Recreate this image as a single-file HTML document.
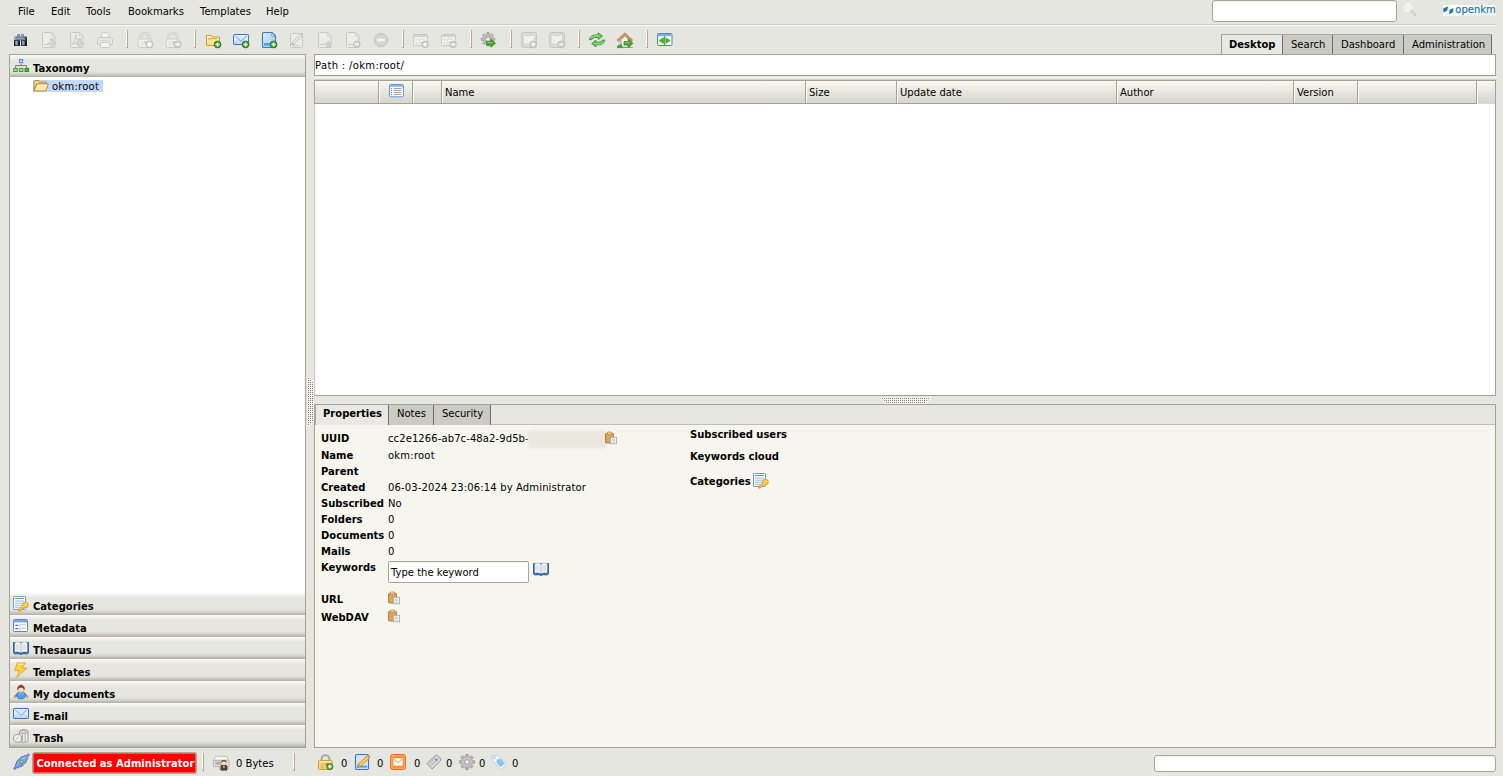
<!DOCTYPE html>
<html lang="en">
<head>
<meta charset="utf-8">
<title>OpenKM</title>
<style>
html,body{margin:0;padding:0;}
body{width:1503px;height:776px;overflow:hidden;background:#e6e6e0;position:relative;
 font-family:"DejaVu Sans",Verdana,"Liberation Sans",sans-serif;font-size:10px;color:#000;line-height:12px;}
.a{position:absolute;}
.t{position:absolute;white-space:nowrap;height:12px;line-height:12px;}
.b{font-weight:bold;}
.ico{position:absolute;width:16px;height:16px;overflow:visible;}
.sep{position:absolute;width:2px;height:18px;background:linear-gradient(to right,#fbfbf9 0,#fbfbf9 1px,#b9a999 1px,#b9a999 2px);}
.sep:after{content:"";position:absolute;left:0;bottom:0;width:2px;height:1px;background:#b9a999;}
.sh{position:absolute;left:10px;width:295px;height:22px;
 background:linear-gradient(to bottom,#fdfcfc 0,#f5f4f3 1.5px,#ecece8 3.5px,#e6e6e0 5.5px,#e6e6e0 16px,#dcdcd4 18px,#c6c6bc 20px,#b0b0a4 22px);}
.sh .t{left:23px;top:8px;font-weight:bold;}
.tab{position:absolute;top:35px;height:19px;background:#cbcbc5;border-right:1px solid #6e6e6e;}
.tab .t{top:4px;}
.th{position:absolute;top:81px;height:22px;background:linear-gradient(to bottom,#f9f9f2 0,#efefe8 6px,#e5e5de 12px,#dbdbd5 18px,#d6d6d0 22px);}
.cs{position:absolute;top:81px;width:2px;height:22px;background:linear-gradient(to right,#a4a494 0,#a4a494 1px,#fbfbf6 1px,#fbfbf6 2px);}
.inp{position:absolute;background:#fff;border:1px solid #a6a692;border-radius:3px;box-sizing:border-box;box-shadow:inset 0 1px 1px rgba(0,0,0,.06);}
</style>
</head>
<body>
<!-- menu bar -->
<div class="t" style="left:18px;top:6px;">File</div>
<div class="t" style="left:51px;top:6px;">Edit</div>
<div class="t" style="left:86px;top:6px;">Tools</div>
<div class="t" style="left:128px;top:6px;">Bookmarks</div>
<div class="t" style="left:200px;top:6px;">Templates</div>
<div class="t" style="left:266px;top:6px;">Help</div>
<div class="a" style="left:9px;top:24px;width:1487px;height:1px;background:#cbcbc5;"></div>
<div class="a" style="left:9px;top:25px;width:1487px;height:1px;background:#fbfbf9;"></div>
<div class="inp" style="left:1212px;top:0px;width:185px;height:22px;"></div>
<svg class="ico" style="left:1403px;top:3px;" width="16" height="16" viewBox="0 0 16 16"><circle cx="5" cy="4.600" r="5" fill="#efefed" stroke="#dadad8" stroke-width=".7"/><circle cx="5" cy="4.600" r="4.100" fill="none" stroke="#f7f7f5" stroke-width="1"/><path d="M8.600 8.200l3.600 3.600" stroke="#c6c6c4" stroke-width="2.600" stroke-linecap="round"/><path d="M8.800 8.400l3.200 3.200" stroke="#f0f0ee" stroke-width="1"/></svg>
<!-- logo -->
<div class="a" style="left:1443px;top:5px;width:53px;height:11px;background:#fff;"></div>
<svg class="a" style="left:1443px;top:5px;" width="54" height="11" viewBox="0 0 54 11"><path d="M.2 3.600L5.100 1.300 4.200 5.800.45 7.400zM6.500 5.100L10.300 3.100V7.100L6 9.400z" fill="#1f78a8"/><path d="M4.600 1.600L6.600 1 7.600 2.600M1.600 7.800L3.400 9.600 5.200 9.200" fill="none" stroke="#a9cfe2" stroke-width=".5"/><text x="12.300" y="8" font-family="DejaVu Sans,Liberation Sans,sans-serif" font-size="11.300" fill="#1f7aa6" stroke="#1f7aa6" stroke-width=".25" textLength="40.500" lengthAdjust="spacingAndGlyphs">openkm</text><path d="M22 10.100h31" stroke="#bcdcec" stroke-width=".8"/></svg>
<!-- toolbar -->
<svg class="ico" style="left:13px;top:32px;" width="16" height="16" viewBox="0 0 16 16"><path d="M4 1.900h3v2.800H4zM8.100 1.900h2.900v2.800H8.100z" fill="#6f87a1"/><path d="M5 2v2.600M9.600 2v2.600" stroke="#b4c6d8" stroke-width=".7"/><path d="M1.300 5.600Q1.500 4.300 3 4.300H12Q13.600 4.300 13.800 5.600L14 8.500H1z" fill="#6d849d"/><path d="M1.600 6.400Q1.800 5 3 4.800L3.400 8H1.400z" fill="#9db1c6"/><path d="M4.800 6.700Q7.500 5.500 10.400 6.700" fill="none" stroke="#8fb8e6" stroke-width=".9"/><path d="M12.200 4.400Q13.600 4.500 13.800 5.600L14 8.500H12.800z" fill="#1a222c"/><path d="M1 8.300h6v5.700H1zM8.100 8.300H14v5.700H8.100z" fill="#161e29"/><path d="M2.400 9h2.300v4.300H2.400zM9.300 9h2.200v4.300H9.300z" fill="#b3c1cf"/><path d="M3.900 9.600v3.700M10.800 9.600v3.700" stroke="#5c6b7b" stroke-width=".6"/></svg>
<svg class="ico" style="left:41px;top:32px;" width="16" height="16" viewBox="0 0 16 16"><path d="M2.5 .5H10.500L14 4V14.5a1 1 0 0 1-1 1H2.5a1 1 0 0 1-1-1V1.5a1 1 0 0 1 1-1z" fill="#ebebe9" stroke="#c8c8c6"/><path d="M10.500 .8V4h3.200" fill="none" stroke="#d4d4d2"/><path d="M3 12.5h4" stroke="#d0d0ce"/><path d="M9.200 6.800h3v4.200H14.800L10.700 15.300 6.600 11H9.200z" fill="#d1d1cf" stroke="#c2c2c0" stroke-width=".6"/><path d="M10.200 7.500v5" stroke="#e2e2e0" stroke-width=".8"/></svg>
<svg class="ico" style="left:69px;top:32px;" width="16" height="16" viewBox="0 0 16 16"><path d="M2.5 .5H10.500L14 4V14.5a1 1 0 0 1-1 1H2.5a1 1 0 0 1-1-1V1.5a1 1 0 0 1 1-1z" fill="#ebebe9" stroke="#c8c8c6"/><path d="M10.500 .8V4h3.200" fill="none" stroke="#d4d4d2"/><path d="M3 13.5C5 11 6.5 6 6.6 2.5M6.6 2.5C7 7 9 11 11 13M2.5 12.5c3-2 6-2 8 0" fill="none" stroke="#c6c6c4" stroke-width=".9"/><path d="M9.200 6.800h3v4.200H14.800L10.700 15.300 6.600 11H9.200z" fill="#d1d1cf" stroke="#c2c2c0" stroke-width=".6"/><path d="M10.200 7.500v5" stroke="#e2e2e0" stroke-width=".8"/></svg>
<svg class="ico" style="left:97px;top:32px;" width="16" height="16" viewBox="0 0 16 16"><path d="M4.5 .5H10l2 2V7H4.5z" fill="#f0f0ee" stroke="#cdcdcb"/><rect x=".5" y="5.5" width="15" height="7.5" rx="2" fill="#e6e6e4" stroke="#c8c8c6"/><rect x="3.5" y="10.5" width="9" height="5" rx="1" fill="#f3f3f1" stroke="#c8c8c6"/><path d="M3 8.5h10" stroke="#d6d6d4"/></svg>
<svg class="ico" style="left:137px;top:32px;" width="16" height="16" viewBox="0 0 16 16"><path d="M3.300 7.500V5.600a4.500 4.500 0 0 1 9 0V7.500" fill="none" stroke="#d0d0ce" stroke-width="2.700"/><path d="M3.300 7.500V5.600a4.500 4.500 0 0 1 9 0V7.500" fill="none" stroke="#e8e8e6" stroke-width="1"/><rect x="1.300" y="7" width="13.200" height="8.500" rx=".8" fill="#f1f1ef" stroke="#cdcdcb"/><path d="M3.500 9.500h3M3.500 11.300h3M3.500 13.100h4.500" stroke="#dadad8" stroke-width=".9"/><path d="M7.500 9h2v3.200h-2z" fill="#c9c9c7"/><circle cx="12.6" cy="12.4" r="3.500" fill="#dededc" stroke="#b9b9b7" stroke-width=".9"/><path d="M10.399999999999999 12.4h4.400M12.6 10.2v4.400" stroke="#fbfbf9" stroke-width="1.600"/></svg>
<svg class="ico" style="left:165px;top:32px;" width="16" height="16" viewBox="0 0 16 16"><path d="M3.300 7.500V5.600a4.500 4.500 0 0 1 9 0V7.500" fill="none" stroke="#d0d0ce" stroke-width="2.700"/><path d="M3.300 7.500V5.600a4.500 4.500 0 0 1 9 0V7.500" fill="none" stroke="#e8e8e6" stroke-width="1"/><rect x="1.300" y="7" width="13.200" height="8.500" rx=".8" fill="#f1f1ef" stroke="#cdcdcb"/><path d="M3.500 9.500h3M3.500 11.300h3M3.500 13.100h4.500" stroke="#dadad8" stroke-width=".9"/><path d="M7.500 9h2v3.200h-2z" fill="#c9c9c7"/><circle cx="12.6" cy="12.4" r="3.500" fill="#d6d6d4" stroke="#b9b9b7" stroke-width=".9"/><path d="M10.399999999999999 12.4h4.400" stroke="#fbfbf9" stroke-width="1.700"/></svg>
<svg class="ico" style="left:205px;top:32px;" width="16" height="16" viewBox="0 0 16 16"><defs><linearGradient id="fg8" x1="0" y1="0" x2="0" y2="1"><stop offset="0" stop-color="#fffdf0"/><stop offset="1" stop-color="#f6d25e"/></linearGradient></defs><path d="M1.5 3.5h5l1 1.5h7v8.5h-13z" fill="url(#fg8)" stroke="#dc9a2e"/><path d="M3.5 6.5h9" stroke="#e8b44a" stroke-width="1.4"/><path d="M3.2 6.2h2.4v1.6H3.2z" fill="#e8b44a"/><path d="M2 8.5h12v4.5H2z" fill="#fbe596" opacity=".7"/><circle cx="12.6" cy="12.5" r="3.4" fill="#3f9b2a" stroke="#2b7a1b" stroke-width=".9"/><path d="M10.6 12.5h4M12.6 10.5v4" stroke="#fff" stroke-width="1.5"/></svg>
<svg class="ico" style="left:233px;top:32px;" width="16" height="16" viewBox="0 0 16 16"><defs><linearGradient id="mg9" x1="0" y1="0" x2="0" y2="1"><stop offset="0" stop-color="#ffffff"/><stop offset="1" stop-color="#bcd4f6"/></linearGradient></defs><rect x=".5" y="2.5" width="15" height="10" rx=".8" fill="url(#mg9)" stroke="#3b74c6"/><path d="M1.6 3.6L8 9.2l6.4-5.6" fill="#dbe8fb" stroke="#6a9be0" stroke-width=".9"/><path d="M1.6 11.6L6 7.5M14.4 11.6L10 7.5" stroke="#a5c3ee" stroke-width=".7"/><circle cx="12.6" cy="12.5" r="3.4" fill="#3f9b2a" stroke="#2b7a1b" stroke-width=".9"/><path d="M10.6 12.5h4M12.6 10.5v4" stroke="#fff" stroke-width="1.5"/></svg>
<svg class="ico" style="left:261px;top:32px;" width="16" height="16" viewBox="0 0 16 16"><defs><linearGradient id="dg10" x1="0" y1="0" x2="1" y2="1"><stop offset="0" stop-color="#e3eefc"/><stop offset="1" stop-color="#9fc3f1"/></linearGradient></defs><path d="M2.5 .5H11L14.5 4V14.5a1 1 0 0 1-1 1H2.5a1 1 0 0 1-1-1V1.5a1 1 0 0 1 1-1z" fill="url(#dg10)" stroke="#3a78cb" stroke-width="1.1"/><path d="M10.8 .8V4.2h3.4z" fill="#fff" stroke="#3a78cb" stroke-width=".7"/><rect x="3" y="11" width="8" height="2.6" fill="#3da5f4"/><circle cx="12.6" cy="12.5" r="3.4" fill="#3f9b2a" stroke="#2b7a1b" stroke-width=".9"/><path d="M10.6 12.5h4M12.6 10.5v4" stroke="#fff" stroke-width="1.5"/></svg>
<svg class="ico" style="left:289px;top:32px;" width="16" height="16" viewBox="0 0 16 16"><rect x="1.5" y="1.5" width="12" height="14" rx="1" fill="#ebebe9" stroke="#c8c8c6"/><path d="M3 13.5h7.5" stroke="#d0d0ce" stroke-width="1.2"/><path d="M3.6 11.8L12.4 2.6" stroke="#c6c6c4" stroke-width="3.2" stroke-linecap="round"/><path d="M4.2 11.2L12 3" stroke="#f0f0ee" stroke-width="1.3"/><path d="M2.6 13l.6-2.2 1.6 1.6z" fill="#bdbdbb"/></svg>
<svg class="ico" style="left:317px;top:32px;" width="16" height="16" viewBox="0 0 16 16"><path d="M2.5 .5H10.500L14 4V14.5a1 1 0 0 1-1 1H2.5a1 1 0 0 1-1-1V1.5a1 1 0 0 1 1-1z" fill="#ebebe9" stroke="#c8c8c6"/><path d="M10.500 .8V4h3.200" fill="none" stroke="#d4d4d2"/><path d="M3 12.5h5" stroke="#d0d0ce" stroke-width="1.4"/><path d="M11.5 8.6l1.1 2.4 2.6.3-1.9 1.8.5 2.6-2.3-1.3-2.3 1.3.5-2.6-1.9-1.8 2.6-.3z" fill="#cfcfcd" stroke="#c0c0be" stroke-width=".5"/></svg>
<svg class="ico" style="left:345px;top:32px;" width="16" height="16" viewBox="0 0 16 16"><path d="M2.5 .5H10.500L14 4V14.5a1 1 0 0 1-1 1H2.5a1 1 0 0 1-1-1V1.5a1 1 0 0 1 1-1z" fill="#ebebe9" stroke="#c8c8c6"/><path d="M10.500 .8V4h3.200" fill="none" stroke="#d4d4d2"/><path d="M3 12.5h5" stroke="#d0d0ce" stroke-width="1.4"/><circle cx="11.8" cy="12.2" r="3.3" fill="#d2d2d0" stroke="#bcbcba" stroke-width=".9"/><path d="M9.8 12.2h4" stroke="#f6f6f4" stroke-width="1.5"/></svg>
<svg class="ico" style="left:373px;top:32px;" width="16" height="16" viewBox="0 0 16 16"><circle cx="8" cy="8" r="6.6" fill="#d5d5d3" stroke="#c3c3c1"/><rect x="4.2" y="6.8" width="7.6" height="2.4" rx=".5" fill="#f6f6f4"/></svg>
<svg class="ico" style="left:413px;top:32px;" width="16" height="16" viewBox="0 0 16 16"><rect x=".5" y="2.5" width="14" height="11" rx=".8" fill="#f3f3f1" stroke="#c8c8c6"/><path d="M.8 3h13.4v2.2H.8z" fill="#d4d4d2"/><path d="M2.4 7.8h2.2M2.4 11h2.2" stroke="#c4c4c2" stroke-width="1.1"/><path d="M6.4 9.3V7.2h6M6.4 12.2v-1.8h4" fill="none" stroke="#d2d2d0" stroke-width=".9"/><circle cx="12" cy="12.4" r="3.3" fill="#d2d2d0" stroke="#bcbcba" stroke-width=".9"/><path d="M10 12.4h4M12 10.4v4" stroke="#f6f6f4" stroke-width="1.4"/></svg>
<svg class="ico" style="left:441px;top:32px;" width="16" height="16" viewBox="0 0 16 16"><rect x=".5" y="2.5" width="14" height="11" rx=".8" fill="#f3f3f1" stroke="#c8c8c6"/><path d="M.8 3h13.4v2.2H.8z" fill="#d4d4d2"/><path d="M2.4 7.8h2.2M2.4 11h2.2" stroke="#c4c4c2" stroke-width="1.1"/><path d="M6.4 9.3V7.2h6M6.4 12.2v-1.8h4" fill="none" stroke="#d2d2d0" stroke-width=".9"/><circle cx="12" cy="12.4" r="3.3" fill="#d2d2d0" stroke="#bcbcba" stroke-width=".9"/><path d="M10 12.4h4" stroke="#f6f6f4" stroke-width="1.5"/></svg>
<svg class="ico" style="left:481px;top:32px;" width="16" height="16" viewBox="0 0 16 16"><path d="M5.81 2.45 L5.88 0.49 L8.12 0.49 L8.19 2.45 L9.52 3.00 L10.95 1.66 L12.54 3.25 L11.20 4.68 L11.75 6.01 L13.71 6.08 L13.71 8.32 L11.75 8.39 L11.20 9.72 L12.54 11.15 L10.95 12.74 L9.52 11.40 L8.19 11.95 L8.12 13.91 L5.88 13.91 L5.81 11.95 L4.48 11.40 L3.05 12.74 L1.46 11.15 L2.80 9.72 L2.25 8.39 L0.29 8.32 L0.29 6.08 L2.25 6.01 L2.80 4.68 L1.46 3.25 L3.05 1.66 L4.48 3.00z" fill="#bdbdbd" stroke="#949494" stroke-width=".7" stroke-linejoin="round"/><circle cx="7" cy="7.2" r="2.3" fill="#eeeeee" stroke="#949494" stroke-width=".7"/><path d="M5.6 9.4h4.3V7.199999999999999l4.6 4-4.6 4V13.0H5.6z" fill="#4ea82f" stroke="#2f7f1a" stroke-width=".8" stroke-linejoin="round"/><path d="M6.3999999999999995 10.5h4.3" stroke="#9bd77f" stroke-width=".9"/></svg>
<svg class="ico" style="left:521px;top:32px;" width="16" height="16" viewBox="0 0 16 16"><rect x=".5" y=".5" width="15" height="15" rx="2" fill="#dadad8" stroke="#c6c6c4"/><rect x="2.5" y="3.5" width="11" height="8.5" rx=".6" fill="#ececea" stroke="#d0d0ce" stroke-width=".7"/><path d="M3 4l5 4.3L13 4" fill="none" stroke="#f8f8f6" stroke-width="1.2"/><circle cx="12.2" cy="12.4" r="3.3" fill="#d2d2d0" stroke="#bcbcba" stroke-width=".9"/><path d="M10.2 12.4h4M12.2 10.4v4" stroke="#f6f6f4" stroke-width="1.4"/></svg>
<svg class="ico" style="left:549px;top:32px;" width="16" height="16" viewBox="0 0 16 16"><rect x=".5" y=".5" width="15" height="15" rx="2" fill="#dadad8" stroke="#c6c6c4"/><rect x="2.5" y="3.5" width="11" height="8.5" rx=".6" fill="#ececea" stroke="#d0d0ce" stroke-width=".7"/><path d="M3 4l5 4.3L13 4" fill="none" stroke="#f8f8f6" stroke-width="1.2"/><circle cx="12.2" cy="12.4" r="3.3" fill="#d2d2d0" stroke="#bcbcba" stroke-width=".9"/><path d="M10.2 12.4h4" stroke="#f6f6f4" stroke-width="1.5"/></svg>
<svg class="ico" style="left:589px;top:32px;" width="16" height="16" viewBox="0 0 16 16"><path d="M.3 7.600C.8 4.600 3.400 2.900 6 2.900H9.300L9.100.8l4.400 3.300-4.200 3.500-.1-2.100H6.200C4.800 5.500 3.600 6.300 3 7.600z" fill="#6cc064" stroke="#2f8f2c" stroke-width=".8" stroke-linejoin="round"/><path d="M.3 7.600C.8 4.600 3.400 2.900 6 2.900H9.300L9.100.8l4.400 3.300-4.200 3.500-.1-2.100H6.200C4.800 5.500 3.600 6.300 3 7.600z" transform="rotate(180 8.100 7.850)" fill="#6cc064" stroke="#2f8f2c" stroke-width=".8" stroke-linejoin="round"/><path d="M1.600 6.400C2.400 4.800 4 3.900 6 3.900h4.600" fill="none" stroke="#b4e6ac" stroke-width=".8"/><path d="M14.600 9.300C13.800 10.900 12.200 11.800 10.200 11.800H5.600" fill="none" stroke="#b4e6ac" stroke-width=".8"/></svg>
<svg class="ico" style="left:617px;top:32px;" width="16" height="16" viewBox="0 0 16 16"><path d="M3.200 8.600v6.600h9.400V8.600L7.900 4.200z" fill="#fbfbfb" stroke="#8c8c8c" stroke-width=".8"/><path d="M3.600 8.800v6h1.400v-7.400z" fill="#c4c4c4"/><path d="M.5 8.800L7.900 2l7.400 6.800" fill="none" stroke="#c48440" stroke-width="2.300" stroke-linejoin="miter"/><path d="M1.400 8.200L7.900 2.300l6.500 5.900" fill="none" stroke="#e6b274" stroke-width=".7"/><path d="M.2 15.600c0-1.700 1.300-2.700 2.600-2.300.8-.9 2.300-.6 2.500.7v1.600z" fill="#4f9d35" stroke="#357a22" stroke-width=".5"/><path d="M.2 15.200h15.600v.7H.2z" fill="#4f9d35"/><path d="M7 9.5h4.3V7.3l4.6 4-4.6 4V13.100000000000001H7z" fill="#4ea82f" stroke="#2f7f1a" stroke-width=".8" stroke-linejoin="round"/><path d="M7.8 10.6h4.3" stroke="#9bd77f" stroke-width=".9"/></svg>
<svg class="ico" style="left:657px;top:32px;" width="16" height="16" viewBox="0 0 16 16"><rect x=".5" y="1.500" width="14.500" height="12" rx="1" fill="#fff" stroke="#5a84c9"/><path d="M1 2h13.500v2.200H1z" fill="#7fa9e8"/><path d="M1 4.200h6.800V13H1z" fill="#d6f5c8"/><path d="M7.800 4.200V13" stroke="#2d7d24" stroke-width="1"/><path d="M2.300 8.600L6.600 5.900v5.400zM13.300 8.600L9 5.900v5.400z" fill="#4fae3c" stroke="#2f8a26" stroke-width=".5"/></svg>
<div class="sep" style="left:126px;top:30px;"></div>
<div class="sep" style="left:194px;top:30px;"></div>
<div class="sep" style="left:402px;top:30px;"></div>
<div class="sep" style="left:470px;top:30px;"></div>
<div class="sep" style="left:510px;top:30px;"></div>
<div class="sep" style="left:578px;top:30px;"></div>
<div class="sep" style="left:646px;top:30px;"></div>
<!-- main tabs -->
<div class="a" style="left:1221px;top:34px;width:271px;height:1px;background:#a9a9a3;"></div>
<div class="a" style="left:1221px;top:35px;width:1px;height:19px;background:#9c9c96;"></div>
<div class="tab" style="left:1222px;top:35px;height:19px;width:60px;background:#e9e9e4;"><div class="t b" style="left:7px;top:4px;">Desktop</div></div>
<div class="tab" style="left:1283px;top:35px;height:19px;width:49px;"><div class="t" style="left:8px;top:4px;">Search</div></div>
<div class="tab" style="left:1333px;top:35px;height:19px;width:70px;"><div class="t" style="left:8px;top:4px;">Dashboard</div></div>
<div class="tab" style="left:1404px;top:35px;height:19px;width:87px;"><div class="t" style="left:8px;top:4px;">Administration</div></div>
<!-- left navigator -->
<div class="a" style="left:9px;top:54px;width:297px;height:694px;background:#fff;border:1px solid #a3a38f;box-sizing:border-box;"></div>
<div class="sh" style="top:55px;"><svg class="ico" style="left:3px;top:3px;" width="16" height="16" viewBox="0 0 16 16"><rect x="6.500" y="1.500" width="3.200" height="3.200" fill="#b9d0f5" stroke="#5b8bd8"/><path d="M8.100 5.500v2M2.600 10V7.600h11V10" fill="none" stroke="#7a7a7a" stroke-width="1"/><rect x=".6" y="10.500" width="3.600" height="3" fill="#a4dc90" stroke="#45a032"/><rect x="6.300" y="10.500" width="3.600" height="3" fill="#a4dc90" stroke="#45a032"/><rect x="12" y="10.500" width="3.600" height="3" fill="#5db848" stroke="#2f8a20"/></svg><div class="t">Taxonomy</div></div>
<div class="a" style="left:33px;top:80px;width:70px;height:12px;background:#c3d9fb;"></div>
<svg class="ico" style="left:33px;top:77.6px;" width="16" height="16" viewBox="0 0 16 16"><path d="M1 3.800c0-.8.500-1.300 1.300-1.300h3.400l1.200 1.500h5.600c.7 0 1.200.5 1.200 1.200V6H3.600L1 12.500z" fill="#f6d890" stroke="#b97a2c" stroke-width=".9" stroke-linejoin="round"/><path d="M3.700 6h11.700l-2.700 7H1z" fill="#fbe9b0" stroke="#b97a2c" stroke-width=".9" stroke-linejoin="round"/><path d="M4.300 7h9.800" stroke="#fff7dc" stroke-width=".8"/></svg>
<div class="t" style="left:52px;top:81px;letter-spacing:.25px;">okm:root</div>
<div class="sh" style="top:593px;"><svg class="ico" style="left:3px;top:3px;" width="16" height="16" viewBox="0 0 16 16"><rect x=".5" y=".5" width="12" height="13" rx=".6" fill="#fdfdff" stroke="#6f9be2"/><path d="M2 2.500h9" stroke="#5fb24c" stroke-width="1.100"/><path d="M2 5h9M2 7.200h9M2 9.400h9M2 11.600h6" stroke="#9dbcec" stroke-width="1"/><path d="M4.600 4v8.500M8 4v6" stroke="#c5d8f5" stroke-width=".8"/><path d="M6.600 14.200l4.600-4" stroke="#e3a21e" stroke-width="3" stroke-linecap="round"/><circle cx="12.400" cy="9" r="2.900" fill="#f7c84a" stroke="#dc9a20" stroke-width=".8"/><path d="M7 13.600l4.400-3.800" stroke="#fbe08a" stroke-width="1"/><circle cx="13.200" cy="8.200" r=".7" fill="#fff6d0"/></svg><div class="t">Categories</div></div>
<div class="sh" style="top:615px;"><svg class="ico" style="left:3px;top:3px;" width="16" height="16" viewBox="0 0 16 16"><rect x=".5" y="1.500" width="14" height="12" rx=".8" fill="#fff" stroke="#5a86d2"/><path d="M1 2h13v2.500H1z" fill="#7aa5e8"/><path d="M2.300 7.300h3M2.300 10.600h3" stroke="#3a6fd0" stroke-width="1.300"/><path d="M6.800 9V6.800h6M6.800 12.200V10.200h6" fill="none" stroke="#b9b9b9" stroke-width=".9"/></svg><div class="t">Metadata</div></div>
<div class="sh" style="top:637px;"><svg class="ico" style="left:3px;top:3px;" width="16" height="16" viewBox="0 0 16 16"><path d="M.5 2.500h15V13l-1 .8H9.200l-1.200.9-1.200-.9H1.500L.5 13z" fill="#2f6aa6" stroke="#1d4f86" stroke-width=".8" stroke-linejoin="round"/><path d="M1.800 2.600c2.200-.9 4.400-.7 6.200.5v9.500c-1.800-1-4-1.200-6.200-.4zM14.200 2.600c-2.200-.9-4.400-.7-6.200.5v9.500c1.800-1 4-1.200 6.200-.4z" fill="#fbfbfb" stroke="#9ab0c8" stroke-width=".5"/><path d="M3 5h3.600M3 7h3.600M3 9h3.600M9.400 5H13M9.400 7H13M9.400 9H13" stroke="#b4b4b4" stroke-width=".7"/></svg><div class="t">Thesaurus</div></div>
<div class="sh" style="top:659px;"><svg class="ico" style="left:3px;top:3px;" width="16" height="16" viewBox="0 0 16 16"><path d="M4.200 1h8L9 6h5L3.600 15.400 6.400 8.600H1.800z" fill="#f7d34a" stroke="#e0a528" stroke-width=".9" stroke-linejoin="round"/><path d="M5 2.200h5.200" stroke="#fdf0a8" stroke-width="1"/></svg><div class="t">Templates</div></div>
<div class="sh" style="top:681px;"><svg class="ico" style="left:3px;top:3px;" width="16" height="16" viewBox="0 0 16 16"><path d="M4.600 9.200L2 12.400M11.400 9.200L14 12.400" stroke="#3f86e8" stroke-width="1.300" stroke-linecap="round"/><circle cx="1.900" cy="12.700" r="1.100" fill="#f0a050" stroke="#d07a28" stroke-width=".4"/><circle cx="14.100" cy="12.700" r="1.100" fill="#f0a050" stroke="#d07a28" stroke-width=".4"/><ellipse cx="8" cy="11.600" rx="4.300" ry="3.300" fill="#4f9ff5" stroke="#2a6cd8" stroke-width=".8"/><path d="M5 10.400c1.600-1 4.400-1 6 0" fill="none" stroke="#9acbfb" stroke-width=".8"/><circle cx="8" cy="5.400" r="3.200" fill="#fbdcc0" stroke="#c98a5a" stroke-width=".6"/><path d="M4.700 5.600C4.300 2.600 6 1 8 1s3.700 1.600 3.300 4.600C10.600 4 9.600 3.400 8 3.400S5.400 4 4.700 5.600z" fill="#8a4a22" stroke="#6a3416" stroke-width=".5"/></svg><div class="t">My documents</div></div>
<div class="sh" style="top:703px;"><svg class="ico" style="left:3px;top:3px;" width="16" height="16" viewBox="0 0 16 16"><defs><linearGradient id="mg230" x1="0" y1="0" x2="0" y2="1"><stop offset="0" stop-color="#ffffff"/><stop offset="1" stop-color="#bcd4f6"/></linearGradient></defs><rect x=".5" y="2.500" width="15" height="10" rx=".6" fill="url(#mg230)" stroke="#3b74c6"/><path d="M1.600 3.600L8 9.400l6.400-5.800" fill="#dbe8fb" stroke="#6a9be0" stroke-width=".9"/><path d="M1.600 11.600L6 7.700M14.400 11.600L10 7.700" stroke="#a5c3ee" stroke-width=".7"/></svg><div class="t">E-mail</div></div>
<div class="sh" style="top:725px;"><svg class="ico" style="left:3px;top:3px;" width="16" height="16" viewBox="0 0 16 16"><path d="M6.400 3.800c0-1.200 1.900-2 4.300-2s4.300.8 4.300 2V12.600c0 1-1.900 1.800-4.300 1.800s-4.300-.8-4.300-1.800z" fill="#ededed" stroke="#8e8e8e" stroke-width=".8"/><ellipse cx="10.700" cy="3.800" rx="4.300" ry="1.700" fill="#d6d6d6" stroke="#8e8e8e" stroke-width=".7"/><path d="M9.400 6.200v7.600M12.200 6.200v7.600" stroke="#a8a8a8" stroke-width="1"/><ellipse cx="4.600" cy="10.300" rx="4.100" ry="3.900" fill="#f4f4f4" stroke="#868686" stroke-width=".8"/><ellipse cx="4.600" cy="10.300" rx="2.900" ry="2.700" fill="none" stroke="#dcdcdc" stroke-width=".7"/><path d="M3.200 10.800l2.400-1" stroke="#a4a4a4" stroke-width=".9"/></svg><div class="t">Trash</div></div>
<svg class="a" style="left:307px;top:377px;" width="7" height="50" viewBox="0 0 7 50"><defs><pattern id="dp1" width="2" height="2" patternUnits="userSpaceOnUse"><rect x="1" y="1" width="1" height="1" fill="#7f7f6c"/></pattern></defs><path d="M0 0h2l5 5v40l-5 5H0z" fill="#f4f4f0"/><rect x="0" y="0" width="2" height="48" fill="url(#dp1)"/><rect x="2" y="2" width="2" height="44" fill="url(#dp1)"/><rect x="4" y="4" width="2" height="40" fill="url(#dp1)"/></svg>
<!-- path -->
<div class="a" style="left:314px;top:54px;width:1182px;height:22px;background:#fff;border:1px solid #a3a38f;box-sizing:border-box;"></div>
<div class="t" style="left:315px;top:60px;letter-spacing:.34px;">Path : /okm:root/</div>
<!-- file browser -->
<div class="a" style="left:314px;top:76px;width:1183px;height:4px;background:linear-gradient(to bottom,#e2e2de 0,#e2e2de 1px,#f7f7f6 1px,#f7f7f6 2px,#e6e6e2 2px,#e6e6e2 3px,#d4d4ce 3px,#d4d4ce 4px);"></div>
<div class="a" style="left:314px;top:80px;width:1182px;height:316px;background:#fff;border:1px solid #a3a38f;box-sizing:border-box;"></div>
<div class="a" style="left:314px;top:104px;width:1px;height:291px;background:#cbcbc3;"></div>
<div class="a" style="left:315px;top:104px;width:1px;height:291px;background:#f3f3f1;"></div>
<div class="th" style="left:315px;width:1180px;"></div>
<div class="a" style="left:315px;top:103px;width:1162px;height:1px;background:#a3a38f;"></div>
<div class="a" style="left:1478px;top:103px;width:17px;height:1px;background:#d9d9d3;"></div>
<div class="cs" style="left:378px;"></div>
<div class="cs" style="left:412px;"></div>
<div class="cs" style="left:441px;"></div>
<div class="cs" style="left:805px;"></div>
<div class="cs" style="left:896px;"></div>
<div class="cs" style="left:1116px;"></div>
<div class="cs" style="left:1293px;"></div>
<div class="cs" style="left:1357px;"></div>
<div class="cs" style="left:1476px;"></div>
<svg class="ico" style="left:389px;top:84px;" width="16" height="16" viewBox="0 0 16 16"><rect x=".5" y=".5" width="14" height="12.300" rx="1.200" fill="#fff" stroke="#6a94dc"/><path d="M1 1h13v1.800H1z" fill="#8ab0ee"/><path d="M4.500 4.500h8M4.500 6.500h8M4.500 8.500h8M4.500 10.500h8" stroke="#a2a2a2" stroke-width="1"/><path d="M2 4.500h1M2 6.500h1M2 8.500h1M2 10.500h1" stroke="#3a8af0" stroke-width="1"/></svg>
<div class="t" style="left:445px;top:87px;">Name</div>
<div class="t" style="left:809px;top:87px;">Size</div>
<div class="t" style="left:900px;top:87px;">Update date</div>
<div class="t" style="left:1120px;top:87px;">Author</div>
<div class="t" style="left:1297px;top:87px;">Version</div>
<svg class="a" style="left:881px;top:397px;" width="50" height="7" viewBox="0 0 50 7"><defs><pattern id="dp2" width="2" height="2" patternUnits="userSpaceOnUse"><rect x="1" y="1" width="1" height="1" fill="#7f7f6c"/></pattern></defs><path d="M0 0h50v2l-5 5H5l-5-5z" fill="#f4f4f0"/><rect x="0" y="0" width="48" height="2" fill="url(#dp2)"/><rect x="2" y="2" width="44" height="2" fill="url(#dp2)"/><rect x="4" y="4" width="40" height="2" fill="url(#dp2)"/></svg>
<!-- properties -->
<div class="a" style="left:314px;top:404px;width:1182px;height:344px;background:#f6f6ee;border:1px solid #a3a38f;box-sizing:border-box;"></div>
<div class="a" style="left:315px;top:405px;width:1180px;height:20px;background:#e7e7e2;border-bottom:1px solid #bdbdbb;box-sizing:border-box;"></div>
<div class="tab" style="left:315px;top:405px;height:20px;width:73px;background:#e9e9e4;"><div class="t b" style="left:8px;top:3px;">Properties</div></div>
<div class="a" style="left:315px;top:405px;width:1px;height:20px;background:#acaca8;"></div>
<div class="tab" style="left:389px;top:405px;height:20px;width:44px;"><div class="t" style="left:8px;top:3px;">Notes</div></div>
<div class="tab" style="left:434px;top:405px;height:20px;width:56px;"><div class="t" style="left:8px;top:3px;">Security</div></div>
<div class="t b" style="left:321px;top:433px;">UUID</div>
<div class="t" style="left:388px;top:433px;letter-spacing:.1px;">cc2e1266-ab7c-48a2-9d5b-</div>
<div class="t b" style="left:321px;top:450px;">Name</div>
<div class="t" style="left:388px;top:450px;letter-spacing:.22px;">okm:root</div>
<div class="t b" style="left:321px;top:466px;">Parent</div>
<div class="t b" style="left:321px;top:482px;">Created</div>
<div class="t" style="left:388px;top:482px;letter-spacing:.14px;">06-03-2024 23:06:14 by Administrator</div>
<div class="t b" style="left:321px;top:498px;">Subscribed</div>
<div class="t" style="left:388px;top:498px;">No</div>
<div class="t b" style="left:321px;top:514px;">Folders</div>
<div class="t" style="left:388px;top:514px;">0</div>
<div class="t b" style="left:321px;top:530px;">Documents</div>
<div class="t" style="left:388px;top:530px;">0</div>
<div class="t b" style="left:321px;top:546px;">Mails</div>
<div class="t" style="left:388px;top:546px;">0</div>
<div class="t b" style="left:321px;top:562px;">Keywords</div>
<div class="t b" style="left:321px;top:594px;">URL</div>
<div class="t b" style="left:321px;top:612px;">WebDAV</div>
<div class="a" style="left:528px;top:430px;width:78px;height:18px;background:#e9e7de;filter:blur(1.2px);"></div>
<svg class="ico" style="left:604px;top:430px;" width="16" height="16" viewBox="0 0 16 16"><rect x="1.500" y="3.300" width="8" height="9.700" rx="1" fill="#d9a45c" stroke="#b5752e" stroke-width=".9"/><rect x="3.500" y="2" width="4" height="2.400" rx=".8" fill="#f3d9a6" stroke="#b5752e" stroke-width=".7"/><rect x="6.300" y="7.300" width="6.300" height="6.500" fill="#f4f4f4" stroke="#a8a8a8" stroke-width=".8"/><path d="M7.600 9.300h3.600M7.600 10.700h3.600M7.600 12.100h3.600" stroke="#b8b8b8" stroke-width=".6"/></svg>
<div class="inp" style="left:388px;top:561px;width:141px;height:22px;border-radius:2px;"></div>
<div class="t" style="left:391px;top:567px;">Type the keyword</div>
<svg class="ico" style="left:533px;top:561px;" width="16" height="16" viewBox="0 0 16 16"><path d="M.5 2.500h15V13l-1 .8H9.200l-1.200.9-1.200-.9H1.500L.5 13z" fill="#2f6aa6" stroke="#1d4f86" stroke-width=".8" stroke-linejoin="round"/><path d="M1.800 2.600c2.200-.9 4.400-.7 6.200.5v9.500c-1.800-1-4-1.200-6.200-.4zM14.200 2.600c-2.200-.9-4.400-.7-6.200.5v9.500c1.800-1 4-1.200 6.200-.4z" fill="#fbfbfb" stroke="#9ab0c8" stroke-width=".5"/><path d="M3 5h3.600M3 7h3.600M3 9h3.600M9.400 5H13M9.400 7H13M9.400 9H13" stroke="#b4b4b4" stroke-width=".7"/></svg>
<svg class="ico" style="left:387px;top:590px;" width="16" height="16" viewBox="0 0 16 16"><rect x="1.500" y="3.300" width="8" height="9.700" rx="1" fill="#d9a45c" stroke="#b5752e" stroke-width=".9"/><rect x="3.500" y="2" width="4" height="2.400" rx=".8" fill="#f3d9a6" stroke="#b5752e" stroke-width=".7"/><rect x="6.300" y="7.300" width="6.300" height="6.500" fill="#f4f4f4" stroke="#a8a8a8" stroke-width=".8"/><path d="M7.600 9.300h3.600M7.600 10.700h3.600M7.600 12.100h3.600" stroke="#b8b8b8" stroke-width=".6"/></svg>
<svg class="ico" style="left:387px;top:608px;" width="16" height="16" viewBox="0 0 16 16"><rect x="1.500" y="3.300" width="8" height="9.700" rx="1" fill="#d9a45c" stroke="#b5752e" stroke-width=".9"/><rect x="3.500" y="2" width="4" height="2.400" rx=".8" fill="#f3d9a6" stroke="#b5752e" stroke-width=".7"/><rect x="6.300" y="7.300" width="6.300" height="6.500" fill="#f4f4f4" stroke="#a8a8a8" stroke-width=".8"/><path d="M7.600 9.300h3.600M7.600 10.700h3.600M7.600 12.100h3.600" stroke="#b8b8b8" stroke-width=".6"/></svg>
<div class="t b" style="left:690px;top:429px;">Subscribed users</div>
<div class="t b" style="left:690px;top:451px;">Keywords cloud</div>
<div class="t b" style="left:690px;top:476px;">Categories</div>
<svg class="ico" style="left:753px;top:473px;" width="16" height="16" viewBox="0 0 16 16"><rect x=".5" y=".5" width="12" height="13" rx=".6" fill="#fdfdff" stroke="#6f9be2"/><path d="M2 2.500h9" stroke="#5fb24c" stroke-width="1.100"/><path d="M2 5h9M2 7.200h9M2 9.400h9M2 11.600h6" stroke="#9dbcec" stroke-width="1"/><path d="M4.600 4v8.500M8 4v6" stroke="#c5d8f5" stroke-width=".8"/><path d="M6.600 14.200l4.600-4" stroke="#e3a21e" stroke-width="3" stroke-linecap="round"/><circle cx="12.400" cy="9" r="2.900" fill="#f7c84a" stroke="#dc9a20" stroke-width=".8"/><path d="M7 13.600l4.400-3.800" stroke="#fbe08a" stroke-width="1"/><circle cx="13.200" cy="8.200" r=".7" fill="#fff6d0"/></svg>
<!-- status bar -->
<svg class="ico" style="left:13px;top:754px;" width="16" height="16" viewBox="0 0 16 16"><g transform="rotate(-44.500 8.500 7.700)"><path d="M-1.900 6.700H1.200L1.800 5.600 4 5.200 4.600 4.300 7.700 3.900V11.500L4.600 11.100 4 10.200 1.800 9.800 1.200 8.700H-1.900z" fill="#7199dc" stroke="#3f62c0" stroke-width=".7" stroke-linejoin="round"/><path d="M18.900 6.700H15.800L15.200 5.600 13 5.200 12.400 4.300 9.300 3.900V11.500L12.400 11.100 13 10.200 15.200 9.800 15.800 8.700H18.900z" fill="#7da4e2" stroke="#3f62c0" stroke-width=".7" stroke-linejoin="round"/><path d="M2.500 7.700L7 5.400M14.500 7.700L10 5.400" stroke="#a9c4ee" stroke-width=".8"/><rect x="7.800" y="4" width="1.400" height="7.400" fill="#6cc24a"/><rect x="8" y="7.100" width="1" height="1.200" fill="#fff"/></g></svg>
<div class="a" style="left:32px;top:752px;width:165px;height:22px;background:#ff0000;border:1px solid #a6a692;border-radius:3px;box-shadow:inset 0 0 0 1px rgba(255,190,190,.45);box-sizing:border-box;"></div>
<div class="t b" style="left:36.5px;top:758px;color:#fff;">Connected as Administrator</div>
<div class="sep" style="left:202px;top:753px;"></div>
<svg class="ico" style="left:213px;top:755px;" width="16" height="16" viewBox="0 0 16 16"><path d="M.7 5.500L2.600 1.300H13.400L15.500 5.500z" fill="#f6f6f6" stroke="#b2b2b2" stroke-width=".8" stroke-linejoin="round"/><rect x=".5" y="5.300" width="15.500" height="6.300" rx=".8" fill="#e6e6e6" stroke="#a4a4a4" stroke-width=".8"/><rect x="2.600" y="6.900" width="5.600" height="2.700" fill="#b2b2b2" stroke="#9a9a9a" stroke-width=".4"/><path d="M7.800 15.200V11.400c0-1.100.8-1.600 3.100-1.600s3.100.5 3.100 1.600V15.200z" fill="#474747" stroke="#2e2e34" stroke-width=".5"/><path d="M6.200 12.200h1.500v2.300H6.200zM14.100 12.200h1.500v2.300h-1.500z" fill="#e8902c"/><ellipse cx="10.900" cy="8.300" rx="2.400" ry="2" fill="#fbd9b4"/><path d="M8.100 8.300C8 5.600 9.400 4.700 10.900 4.700s2.900.9 2.800 3.600c-.6-1.200-1.500-1.700-2.800-1.700s-2.200.5-2.800 1.700z" fill="#8c4a1c"/><path d="M10 11.200h1.800v1.200H10z" fill="#e8e8ee"/></svg>
<div class="t" style="left:236px;top:758px;">0 Bytes</div>
<div class="sep" style="left:293px;top:753px;"></div>
<svg class="ico" style="left:318px;top:754px;" width="16" height="16" viewBox="0 0 16 16"><path d="M3.600 7V5.200a3.900 3.900 0 0 1 7.800 0V7" fill="none" stroke="#a0a0a0" stroke-width="2.100"/><path d="M4.300 7V5.300a3.200 3.200 0 0 1 6.400 0" fill="none" stroke="#d4d4d4" stroke-width=".6"/><rect x=".5" y="6.500" width="13.500" height="9" rx="1" fill="#f8dd88" stroke="#d99c2a"/><path d="M1.500 7.600h11.500" stroke="#fdf3c4" stroke-width="1"/><path d="M2.500 10h4.500M2.500 12h3.500M2.500 14h4.500" stroke="#dba63c" stroke-width=".9"/><rect x="7.500" y="9" width="3" height="3" fill="#c98a4a"/><circle cx="11.8" cy="12.6" r="3.1" fill="#3f9b2a" stroke="#2b7a1b" stroke-width=".9"/><path d="M9.8 12.6h4M11.8 10.6v4" stroke="#fff" stroke-width="1.5"/></svg>
<div class="t" style="left:341px;top:758px;">0</div>
<svg class="ico" style="left:354px;top:754px;" width="16" height="16" viewBox="0 0 16 16"><rect x="1.500" y=".5" width="13" height="15" rx="1.400" fill="#d3e3fa" stroke="#3a74c8" stroke-width="1.100"/><path d="M3.500 12.600h9.500" stroke="#41a6f3" stroke-width="2"/><path d="M5.400 11.200L14.200 3" stroke="#d9962c" stroke-width="3.800" stroke-linecap="round"/><path d="M5.600 11L14 3.200" stroke="#f7d766" stroke-width="1.900"/><path d="M3.400 13.400l1-3.200 2.300 2.300z" fill="#ecc9a0" stroke="#9a6a38" stroke-width=".4"/><path d="M3.400 13.400l.4-1.300.9.900z" fill="#3a2a1a"/></svg>
<div class="t" style="left:377px;top:758px;">0</div>
<svg class="ico" style="left:390px;top:754px;" width="16" height="16" viewBox="0 0 16 16"><rect x=".5" y=".5" width="15" height="15" rx="2.200" fill="#ff9238" stroke="#ff6c10"/><rect x="1.600" y="1.600" width="12.800" height="12.800" rx="1.500" fill="none" stroke="#fbb870" stroke-width=".8"/><rect x="3.500" y="4.500" width="9" height="7" fill="#fff4ea" stroke="#ffe2c8" stroke-width=".6"/><path d="M3.600 4.700L8 8.600l4.400-3.900" fill="#fff" stroke="#f79a3e" stroke-width=".9"/></svg>
<div class="t" style="left:414px;top:758px;">0</div>
<svg class="ico" style="left:426px;top:754px;" width="16" height="16" viewBox="0 0 16 16"><path d="M.8 9.400L9.600 1.200l2 .4 3.200 3.400-.2 1.800L6 15z" fill="#d6d6d6" stroke="#8e8e8e" stroke-width=".9" stroke-linejoin="round"/><path d="M3.200 9.400L9.800 3.200M5 11.400l6.600-6.200" stroke="#a4a4a4" stroke-width=".8"/><path d="M9.600 5l1.600 1.600" stroke="#4a86d8" stroke-width="1.600"/></svg>
<div class="t" style="left:446px;top:758px;">0</div>
<svg class="ico" style="left:459px;top:754px;" width="16" height="16" viewBox="0 0 16 16"><path d="M6.67 2.66 L6.75 0.50 L9.25 0.50 L9.33 2.66 L10.83 3.29 L12.41 1.81 L14.19 3.59 L12.71 5.17 L13.34 6.67 L15.50 6.75 L15.50 9.25 L13.34 9.33 L12.71 10.83 L14.19 12.41 L12.41 14.19 L10.83 12.71 L9.33 13.34 L9.25 15.50 L6.75 15.50 L6.67 13.34 L5.17 12.71 L3.59 14.19 L1.81 12.41 L3.29 10.83 L2.66 9.33 L0.50 9.25 L0.50 6.75 L2.66 6.67 L3.29 5.17 L1.81 3.59 L3.59 1.81 L5.17 3.29z" fill="#bcbcbc" stroke="#8e8e8e" stroke-width=".7" stroke-linejoin="round"/><circle cx="8" cy="8" r="2.3" fill="#ececec" stroke="#8e8e8e" stroke-width=".7"/><circle cx="8" cy="8" r="3.900" fill="none" stroke="#d2d2d2" stroke-width=".8"/></svg>
<div class="t" style="left:479px;top:758px;">0</div>
<svg class="ico" style="left:491px;top:754px;" width="16" height="16" viewBox="0 0 16 16"><path d="M1 1.200l5.600.2 8.200 8.200c.4.400.4 1 0 1.400L11 14.800c-.4.400-1 .4-1.400 0L1.400 6.600z" fill="#f4f8fc" stroke="#bcc4cc" stroke-width=".8" stroke-linejoin="round"/><path d="M6 5.800l3.800-.2 3.400 3.800-3.400 3.400L6 9z" fill="#8cc4f4" stroke="#6aaae8" stroke-width=".5"/><circle cx="3.600" cy="3.600" r="1.100" fill="#e6e6e0" stroke="#a8b0b8" stroke-width=".6"/></svg>
<div class="t" style="left:512px;top:758px;">0</div>
<div class="inp" style="left:1154px;top:755px;width:342px;height:17px;"></div>
</body>
</html>
